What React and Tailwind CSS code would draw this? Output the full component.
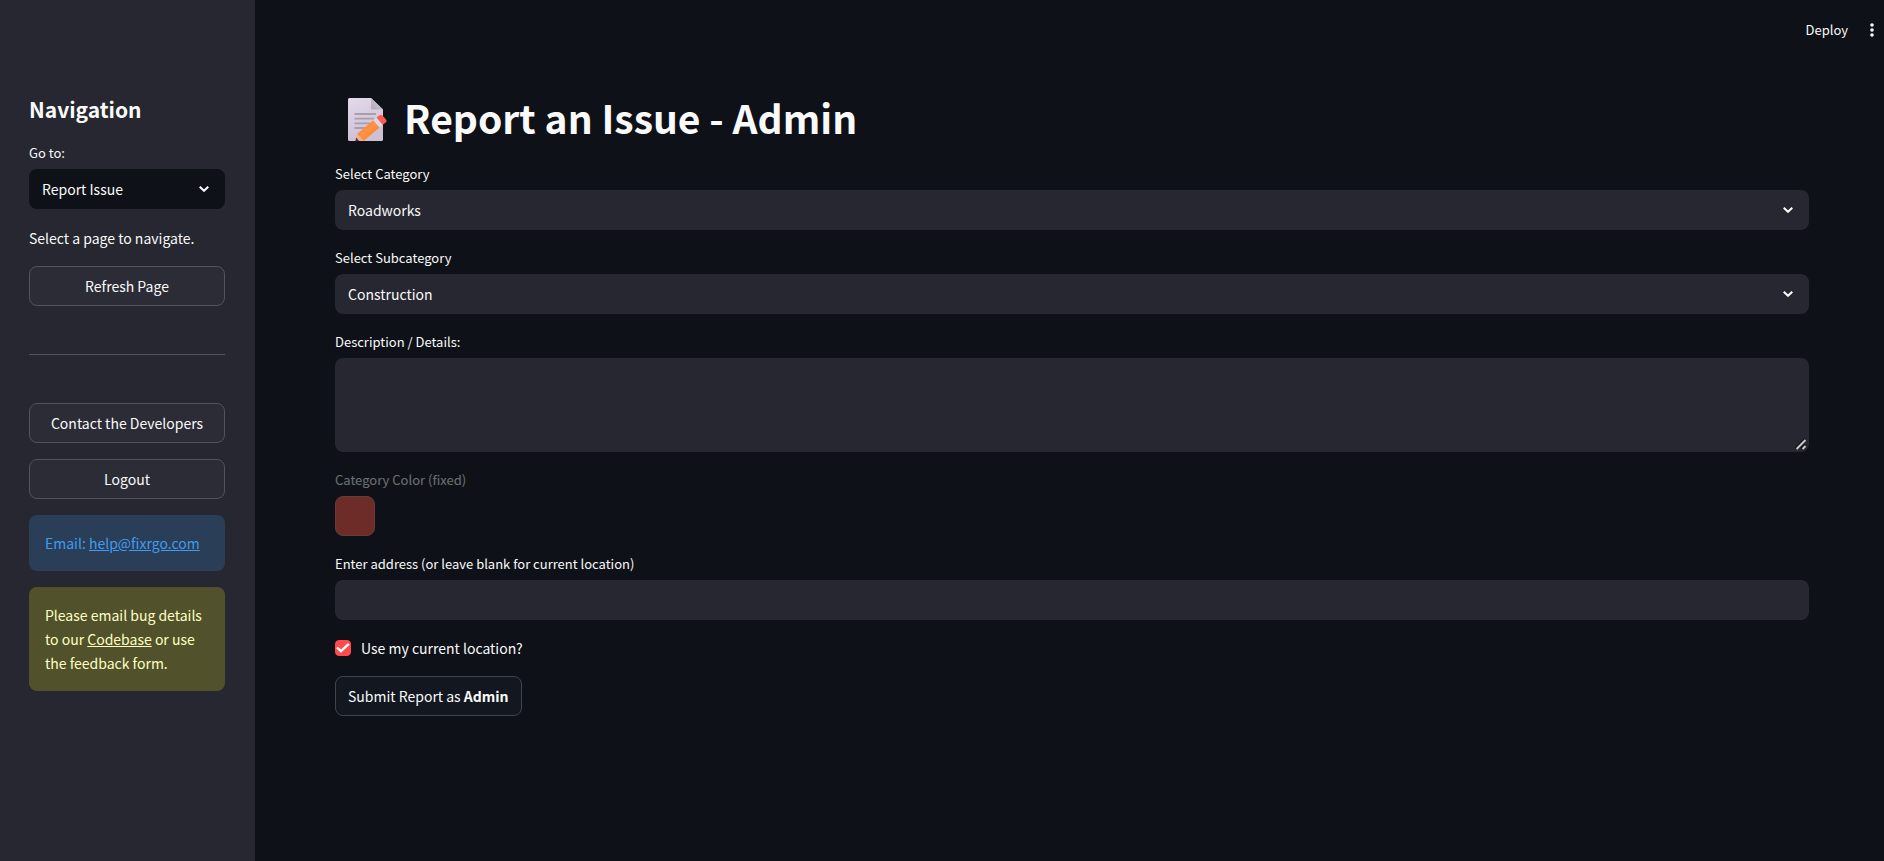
import React from "react";

function Chevron() {
  return (
    <svg
      className="pointer-events-none absolute right-4 top-[17px]"
      width="10"
      height="6"
      viewBox="0 0 10 6"
      fill="none"
      stroke="#fafafa"
      strokeWidth="2"
      aria-hidden="true"
    >
      <path d="M0.7 0.7 5 4.8 9.3 0.7" />
    </svg>
  );
}

function Label({ htmlFor, children }) {
  return (
    <label
      htmlFor={htmlFor}
      className="mb-1 flex h-6 items-center text-[13px] text-[#fafafa]"
    >
      {children}
    </label>
  );
}

function SelectField({ id, label, options, className }) {
  return (
    <div>
      <Label htmlFor={id}>{label}</Label>
      <div className="relative">
        <select
          id={id}
          className={`block h-10 w-full appearance-none rounded-lg pl-[13px] pr-10 outline-none ${className}`}
        >
          {options.map((option) => (
            <option key={option}>{option}</option>
          ))}
        </select>
        <Chevron />
      </div>
    </div>
  );
}

function SidebarButton({ children }) {
  return (
    <button
      type="button"
      className="h-10 w-full rounded-lg border border-[#52535b] bg-[#2b2c36] hover:border-[#ff4b4b]"
    >
      {children}
    </button>
  );
}

function MemoIcon() {
  return (
    <svg width="40" height="43" viewBox="0 0 40 43" aria-hidden="true">
      <defs>
        <linearGradient id="paper" x1="0" y1="0" x2="0.3" y2="1">
          <stop offset="0" stopColor="#e3daea" />
          <stop offset="1" stopColor="#cdc0d3" />
        </linearGradient>
        <linearGradient id="fold" x1="0" y1="1" x2="1" y2="0">
          <stop offset="0" stopColor="#b3abb9" />
          <stop offset="1" stopColor="#d3cad9" />
        </linearGradient>
        <linearGradient id="pencil" x1="0" y1="0" x2="1" y2="1">
          <stop offset="0" stopColor="#ff7044" />
          <stop offset="0.5" stopColor="#ff9442" />
          <stop offset="1" stopColor="#f5672f" />
        </linearGradient>
        <clipPath id="sheet">
          <rect x="0" y="0" width="40" height="43" />
        </clipPath>
      </defs>
      <path
        d="M1.5 0H23L35 11.5V41.5Q35 43 33.5 43H1.5Q0 43 0 41.5V1.5Q0 0 1.5 0Z"
        fill="url(#paper)"
      />
      <path d="M23 0 35 11.5H24.5Q23 11.5 23 10Z" fill="url(#fold)" />
      <path
        d="M6.5 16H28M6.5 20.7H26M6.5 25.4H22M6.5 30H18"
        stroke="#a79fad"
        strokeWidth="1.8"
      />
      <g clipPath="url(#sheet)">
        <path d="M9 36 25.3 22.3 31.5 29.5 15.5 43Z" fill="url(#pencil)" />
        <path d="M9 36 15.5 43 7 45Z" fill="#e9b58c" />
        <path d="M8.2 39.5 12 44 7 45Z" fill="#5b304f" />
        <path d="M25.3 22.3 28.5 19.6 34.7 26.8 31.5 29.5Z" fill="#ddd5e9" />
        <path
          d="M28.5 19.6 31.5 17.2Q33 16 34.5 17.5L38 21.5Q39.3 23 38 24.2L34.7 26.8Z"
          fill="#fb5d50"
        />
      </g>
    </svg>
  );
}

function Sidebar() {
  return (
    <aside className="w-[255px] shrink-0 bg-[#262730] pl-[29px] pr-[30px] pt-[95px]">
      <h2 className="mb-[18px] text-[21px] font-bold leading-7">Navigation</h2>
      <SelectField
        id="page"
        label="Go to:"
        options={["Report Issue"]}
        className="bg-[#0e1117]"
      />
      <p className="mb-4 mt-[17px] leading-6">Select a page to navigate.</p>
      <SidebarButton>Refresh Page</SidebarButton>
      <hr className="my-12 border-[#52535b]" />
      <div className="flex flex-col gap-4">
        <SidebarButton>Contact the Developers</SidebarButton>
        <SidebarButton>Logout</SidebarButton>
        <p className="rounded-lg bg-[#2b3e57] p-4 leading-6 text-[#3d9df3]">
          Email:{" "}
          <a href="mailto:help@fixrgo.com" className="underline">
            help@fixrgo.com
          </a>
        </p>
        <p className="rounded-lg bg-[#51522b] p-4 leading-6 text-[#ffffc2]">
          Please email bug details to our{" "}
          <a href="#codebase" className="underline">
            Codebase
          </a>{" "}
          or use the feedback form.
        </p>
      </div>
    </aside>
  );
}

export default function App() {
  return (
    <div className="flex min-h-screen bg-[#0e1117] font-['Source_Sans_Pro','Noto_Sans_CJK_SC',sans-serif] text-sm text-[#fafafa]">
      <Sidebar />
      <div className="min-w-0 flex-1">
        <header className="flex h-[60px] items-center justify-end gap-5 pr-2">
          <button type="button" className="text-[13px]">
            Deploy
          </button>
          <button type="button" aria-label="Main menu">
            <svg width="8" height="16" viewBox="0 0 8 16" fill="#fafafa">
              <circle cx="4" cy="3" r="1.8" />
              <circle cx="4" cy="8" r="1.8" />
              <circle cx="4" cy="13" r="1.8" />
            </svg>
          </button>
        </header>
        <main className="pb-40 pl-20 pr-[75px] pt-8">
          <h1 className="mb-4 flex h-[54px] items-center gap-4 pl-[13px] text-[39px] font-bold leading-none">
            <MemoIcon />
            <span className="pb-1">Report an Issue - Admin</span>
          </h1>
          <form
            className="flex flex-col gap-4"
            onSubmit={(e) => e.preventDefault()}
          >
            <SelectField
              id="category"
              label="Select Category"
              options={["Roadworks"]}
              className="bg-[#262730]"
            />
            <SelectField
              id="subcategory"
              label="Select Subcategory"
              options={["Construction"]}
              className="bg-[#262730]"
            />
            <div>
              <Label htmlFor="details">Description / Details:</Label>
              <div className="relative">
                <textarea
                  id="details"
                  className="block h-[94px] w-full resize-none rounded-lg bg-[#262730] p-3 outline-none"
                />
                <svg
                  className="pointer-events-none absolute bottom-[2px] right-[2px]"
                  width="12"
                  height="12"
                  viewBox="0 0 12 12"
                  fill="none"
                  aria-hidden="true"
                >
                  <path
                    d="M0.5 10.5 10 1M6 10.5 10 6.5"
                    stroke="#0b0c10"
                    strokeWidth="2"
                  />
                  <path
                    d="M1.5 11 10.5 2M7.5 11 10.5 8"
                    stroke="#c8c8ca"
                    strokeWidth="2"
                  />
                </svg>
              </div>
            </div>
            <div className="opacity-40">
              <Label htmlFor="color">Category Color (fixed)</Label>
              <input
                id="color"
                type="button"
                disabled
                className="block size-10 rounded-lg border border-[#fa7566] bg-[#fc5640]"
              />
            </div>
            <div>
              <Label htmlFor="address">
                Enter address (or leave blank for current location)
              </Label>
              <input
                id="address"
                type="text"
                className="block h-10 w-full rounded-lg bg-[#262730] px-3 outline-none"
              />
            </div>
            <label className="flex h-6 items-center gap-[10px]">
              <span className="relative flex size-4">
                <input
                  type="checkbox"
                  defaultChecked
                  className="peer size-4 appearance-none rounded border border-[#52535b] checked:border-[#ff4b4b] checked:bg-[#ff4b4b]"
                />
                <svg
                  className="pointer-events-none absolute inset-0 hidden peer-checked:block"
                  width="16"
                  height="16"
                  viewBox="0 0 16 16"
                  fill="none"
                  stroke="#fff"
                  strokeWidth="2.3"
                >
                  <path d="M2 7.5 6 11.2 13.8 3.8" />
                </svg>
              </span>
              Use my current location?
            </label>
            <button
              type="submit"
              className="h-10 self-start rounded-lg border border-[#41444c] bg-[#131720] px-3 hover:border-[#ff4b4b]"
            >
              Submit Report as <strong>Admin</strong>
            </button>
          </form>
        </main>
      </div>
    </div>
  );
}
